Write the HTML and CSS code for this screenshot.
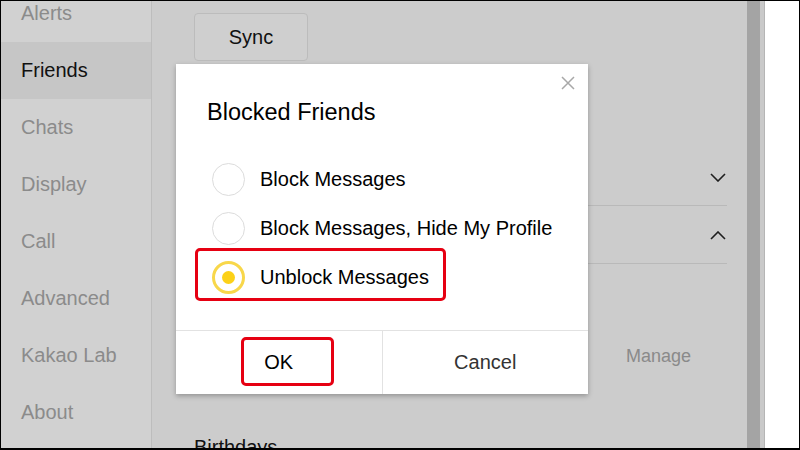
FILE: index.html
```html
<!DOCTYPE html>
<html>
<head>
<meta charset="utf-8">
<link rel="stylesheet" href="styles.css">
</head>
<body>
<div class="app">
  <nav class="sidebar">
    <ul class="menu">
      <li class="item">Alerts</li>
      <li class="item active">Friends</li>
      <li class="item">Chats</li>
      <li class="item">Display</li>
      <li class="item">Call</li>
      <li class="item">Advanced</li>
      <li class="item">Kakao Lab</li>
      <li class="item">About</li>
    </ul>
  </nav>
  <main class="main">
    <button class="sync">Sync</button>
    <div class="rows">
      <div class="row first">
        <svg class="chev" width="16" height="9" viewBox="0 0 16 9"><polyline points="1,1 8,8 15,1" fill="none" stroke="#1e1e1e" stroke-width="1.6"/></svg>
      </div>
      <div class="row">
        <svg class="chev" width="16" height="9" viewBox="0 0 16 9"><polyline points="1,8 8,1 15,8" fill="none" stroke="#1e1e1e" stroke-width="1.6"/></svg>
      </div>
      <div class="manage-row"><span class="manage">Manage</span></div>
      <div class="birthdays">Birthdays</div>
    </div>
  </main>
  <div class="scrollbar"></div>
  <div class="gutter"></div>
  <div class="blank"></div>

  <div class="dialog">
    <svg class="close" width="14" height="14" viewBox="0 0 14 14"><path d="M1 1 L13 13 M13 1 L1 13" stroke="#a8a8a8" stroke-width="1.5" fill="none"/></svg>
    <h1 class="title">Blocked Friends</h1>
    <div class="options">
      <div class="option"><span class="radio"></span><span class="label">Block Messages</span></div>
      <div class="option"><span class="radio"></span><span class="label">Block Messages, Hide My Profile</span></div>
      <div class="option"><span class="radio on"></span><span class="label">Unblock Messages</span></div>
    </div>
    <div class="footer">
      <div class="btn">OK</div>
      <div class="btn cancel">Cancel</div>
    </div>
    <div class="mark mark-option"></div>
    <div class="mark mark-ok"></div>
  </div>
</div>
</body>
</html>
```

FILE: styles.css
```css
* { box-sizing: border-box; }
html, body { margin: 0; padding: 0; }
body {
  width: 800px;
  height: 450px;
  overflow: hidden;
  font-family: "Liberation Sans", Arial, sans-serif;
  background: #fff;
}
.app {
  position: relative;
  width: 800px;
  height: 450px;
  border: 1px solid #000;
  border-bottom-width: 2px;
  display: flex;
  overflow: hidden;
}
.sidebar {
  width: 151px;
  flex: none;
  background: #d1d1d1;
  border-right: 1px solid #bdbdbd;
  overflow: hidden;
}
.menu {
  list-style: none;
  margin: -16px 0 0 0;
  padding: 0;
}
.item {
  height: 57px;
  line-height: 57px;
  padding-left: 20px;
  font-size: 20px;
  color: #8b8b8b;
}
.item.active {
  background: #c6c6c6;
  color: #111;
}
.main {
  width: 595px;
  flex: none;
  background: #cccccc;
  padding: 12px 20px 0 42px;
  overflow: hidden;
}
.sync {
  display: block;
  width: 114px;
  height: 48px;
  border: 1px solid #bcbcbc;
  border-radius: 4px;
  background: #cfcfcf;
  font-family: "Liberation Sans", Arial, sans-serif;
  font-size: 20px;
  color: #111;
  padding: 0;
}
.rows {
  margin-top: 88px;
}
.row {
  height: 58px;
  border-bottom: 1px solid #b9b9b9;
  display: flex;
  align-items: center;
  justify-content: flex-end;
  padding-right: 1px;
}
.row.first {
  height: 57px;
}
.row .chev { margin-top: 1px; }
.manage-row {
  height: 106px;
  display: flex;
  align-items: flex-end;
  justify-content: flex-end;
  padding-right: 36px;
}
.manage {
  font-size: 18px;
  color: #8a8a8a;
  line-height: 22px;
  margin-bottom: 3px;
}
.birthdays {
  margin-top: 66px;
  font-size: 20px;
  color: #111;
}
.scrollbar {
  width: 13px;
  flex: none;
  background: #a4a4a4;
}
.gutter {
  width: 4px;
  flex: none;
  background: #c9c9c9;
  border-right: 1px solid #b5b5b5;
  box-sizing: content-box;
}
.blank {
  flex: 1;
  background: #fff;
}

.dialog {
  position: absolute;
  left: 175px;
  top: 63px;
  width: 412px;
  height: 330px;
  background: #fff;
  box-shadow: 0 2px 5px rgba(0,0,0,0.28);
  display: flex;
  flex-direction: column;
}
.close {
  position: absolute;
  right: 13px;
  top: 12px;
}
.title {
  margin: 35px 0 0 31px;
  font-size: 23.5px;
  font-weight: normal;
  line-height: 27px;
  color: #000;
}
.options {
  margin-top: 29px;
  padding-left: 36px;
}
.option {
  height: 49px;
  display: flex;
  align-items: center;
}
.radio {
  width: 33px;
  height: 33px;
  border-radius: 50%;
  border: 1px solid #dcdcdc;
  display: flex;
  align-items: center;
  justify-content: center;
  flex: none;
}
.radio.on {
  border: 3px solid #f8d74a;
}
.radio.on::after {
  content: "";
  width: 13px;
  height: 13px;
  border-radius: 50%;
  background: #fcd118;
}
.label {
  margin-left: 15px;
  font-size: 20px;
  color: #000;
}
.footer {
  margin-top: auto;
  height: 64px;
  border-top: 1px solid #e2e2e2;
  display: flex;
}
.btn {
  flex: 1;
  display: flex;
  align-items: center;
  justify-content: center;
  font-size: 20px;
  color: #000;
}
.btn.cancel {
  border-left: 1px solid #e2e2e2;
  color: #333;
}
.mark {
  position: absolute;
  border: 3px solid #e60012;
  border-radius: 5px;
}
.mark-option {
  left: 19px;
  top: 184px;
  width: 251px;
  height: 53px;
}
.mark-ok {
  left: 65px;
  top: 273px;
  width: 93px;
  height: 49px;
}
```
